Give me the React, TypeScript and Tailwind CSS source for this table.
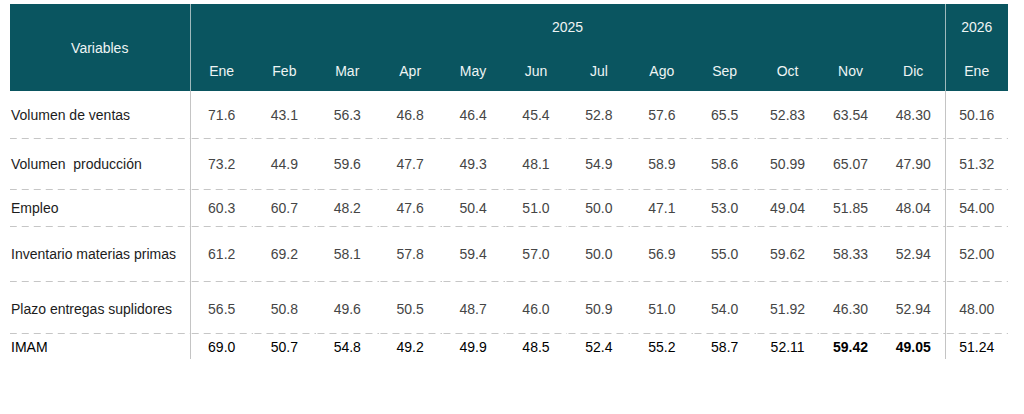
const months = ["Ene", "Feb", "Mar", "Apr", "May", "Jun", "Jul", "Ago", "Sep", "Oct", "Nov", "Dic"];

type Row = {
  label: string;
  values: string[];
  next: string;
  height: string;
  total?: boolean;
};

const rows: Row[] = [
  {
    label: "Volumen de ventas",
    values: ["71.6", "43.1", "56.3", "46.8", "46.4", "45.4", "52.8", "57.6", "65.5", "52.83", "63.54", "48.30"],
    next: "50.16",
    height: "h-[48px]",
  },
  {
    label: "Volumen\u00a0 producción",
    values: ["73.2", "44.9", "59.6", "47.7", "49.3", "48.1", "54.9", "58.9", "58.6", "50.99", "65.07", "47.90"],
    next: "51.32",
    height: "h-[51px]",
  },
  {
    label: "Empleo",
    values: ["60.3", "60.7", "48.2", "47.6", "50.4", "51.0", "50.0", "47.1", "53.0", "49.04", "51.85", "48.04"],
    next: "54.00",
    height: "h-[37px]",
  },
  {
    label: "Inventario materias primas",
    values: ["61.2", "69.2", "58.1", "57.8", "59.4", "57.0", "50.0", "56.9", "55.0", "59.62", "58.33", "52.94"],
    next: "52.00",
    height: "h-[55px]",
  },
  {
    label: "Plazo entregas suplidores",
    values: ["56.5", "50.8", "49.6", "50.5", "48.7", "46.0", "50.9", "51.0", "54.0", "51.92", "46.30", "52.94"],
    next: "48.00",
    height: "h-[52px]",
  },
  {
    label: "IMAM",
    values: ["69.0", "50.7", "54.8", "49.2", "49.9", "48.5", "52.4", "55.2", "58.7", "52.11", "59.42", "49.05"],
    next: "51.24",
    height: "h-[25px]",
    total: true,
  },
];

// dashed separator drawn as a repeating gradient along the bottom of each cell
const dashed =
  "bg-[linear-gradient(to_right,#c6c6c6_7px,transparent_7px)] bg-[length:12px_1px] bg-repeat-x bg-bottom";

export default function App() {
  return (
    <div className="w-[1024px] h-[414px] bg-white pt-[4px] pl-[10px] font-['Liberation_Sans',Arial,sans-serif]">
      <table className="w-[998px] border-collapse table-fixed text-[14px]">
        <colgroup>
          <col className="w-[180px]" />
          {months.map((m) => (
            <col key={m} />
          ))}
          <col className="w-[63px]" />
        </colgroup>
        <thead className="bg-[#0a5560] text-[#eef4f4]">
          <tr className="h-[46px]">
            <th rowSpan={2} className="font-normal border-r border-[#9fb9bc] align-middle pt-[1px]">
              Variables
            </th>
            <th colSpan={12} className="font-normal border-r border-[#9fb9bc] align-middle pt-[1px]">
              2025
            </th>
            <th className="font-normal align-middle pt-[1px]">2026</th>
          </tr>
          <tr className="h-[41px]">
            {months.map((m) => (
              <th key={m} className="font-normal align-middle pt-[1px]">
                {m}
              </th>
            ))}
            <th className="font-normal align-middle border-l border-[#9fb9bc] pt-[1px]">Ene</th>
          </tr>
        </thead>
        <tbody>
          {rows.map((r, i) => {
            const last = i === rows.length - 1;
            const line = last ? "" : dashed;
            const pad = r.total ? "pt-[2px]" : i === 4 ? "pt-[3px]" : "";
            return (
              <tr key={r.label} className={r.height}>
                <td
                  className={`${line} ${pad} border-r border-[#c4c4c4] pl-[1px] align-middle whitespace-nowrap ${
                    r.total ? "text-black" : "text-[#1c1c1c]"
                  }`}
                >
                  {r.label}
                </td>
                {r.values.map((v, j) => (
                  <td
                    key={j}
                    className={`${line} ${pad} text-center align-middle ${
                      r.total ? "text-black" : "text-[#454545]"
                    } ${r.total && j >= 10 ? "font-bold" : ""}`}
                  >
                    {v}
                  </td>
                ))}
                <td
                  className={`${line} ${pad} border-l border-[#c4c4c4] text-center align-middle ${
                    r.total ? "text-black" : "text-[#454545]"
                  }`}
                >
                  {r.next}
                </td>
              </tr>
            );
          })}
        </tbody>
      </table>
    </div>
  );
}
